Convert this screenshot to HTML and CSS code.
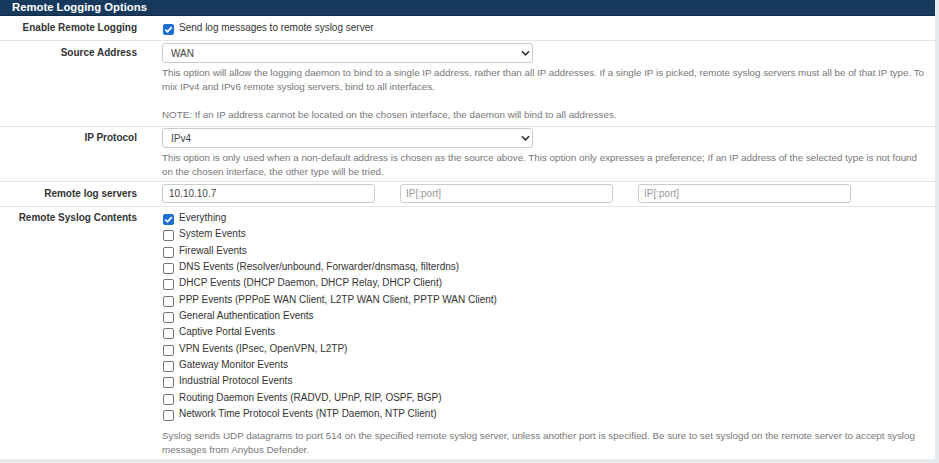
FILE: index.html
```html
<!DOCTYPE html>
<html>
<head>
<meta charset="utf-8">
<link rel="stylesheet" href="styles.css">
</head>
<body>
<div class="panel">
  <div class="panel-heading">Remote Logging Options</div>

  <div class="row row-enable">
    <div class="label">Enable Remote Logging</div>
    <div class="content">
      <div class="check-line"><span class="cb checked"><svg viewBox="0 0 11 11" width="11" height="11"><path d="M2.3 5.6 L4.5 7.8 L8.8 3.2" fill="none" stroke="#fff" stroke-width="1.8"/></svg></span><span>Send log messages to remote syslog server</span></div>
    </div>
  </div>

  <div class="row row-select row-source">
    <div class="label">Source Address</div>
    <div class="content">
      <div class="select"><span>WAN</span><svg class="chev" viewBox="0 0 10 6" width="9" height="6"><path d="M1 1 L5 5 L9 1" fill="none" stroke="#333" stroke-width="1.8"/></svg></div>
      <div class="help">This option will allow the logging daemon to bind to a single IP address, rather than all IP addresses. If a single IP is picked, remote syslog servers must all be of that IP type. To mix IPv4 and IPv6 remote syslog servers, bind to all interfaces.<br><br>NOTE: If an IP address cannot be located on the chosen interface, the daemon will bind to all addresses.</div>
    </div>
  </div>

  <div class="row row-select row-proto">
    <div class="label">IP Protocol</div>
    <div class="content">
      <div class="select"><span>IPv4</span><svg class="chev" viewBox="0 0 10 6" width="9" height="6"><path d="M1 1 L5 5 L9 1" fill="none" stroke="#333" stroke-width="1.8"/></svg></div>
      <div class="help">This option is only used when a non-default address is chosen as the source above. This option only expresses a preference; If an IP address of the selected type is not found on the chosen interface, the other type will be tried.</div>
    </div>
  </div>

  <div class="row row-servers">
    <div class="label">Remote log servers</div>
    <div class="content inputs">
      <div class="input">10.10.10.7</div>
      <div class="input placeholder">IP[:port]</div>
      <div class="input placeholder">IP[:port]</div>
    </div>
  </div>

  <div class="row row-contents">
    <div class="label">Remote Syslog Contents</div>
    <div class="content">
      <div class="check-list">
        <div class="check-line"><span class="cb checked"><svg viewBox="0 0 11 11" width="11" height="11"><path d="M2.3 5.6 L4.5 7.8 L8.8 3.2" fill="none" stroke="#fff" stroke-width="1.8"/></svg></span><span>Everything</span></div>
        <div class="check-line"><span class="cb"></span><span>System Events</span></div>
        <div class="check-line"><span class="cb"></span><span>Firewall Events</span></div>
        <div class="check-line"><span class="cb"></span><span>DNS Events (Resolver/unbound, Forwarder/dnsmasq, filterdns)</span></div>
        <div class="check-line"><span class="cb"></span><span>DHCP Events (DHCP Daemon, DHCP Relay, DHCP Client)</span></div>
        <div class="check-line"><span class="cb"></span><span>PPP Events (PPPoE WAN Client, L2TP WAN Client, PPTP WAN Client)</span></div>
        <div class="check-line"><span class="cb"></span><span>General Authentication Events</span></div>
        <div class="check-line"><span class="cb"></span><span>Captive Portal Events</span></div>
        <div class="check-line"><span class="cb"></span><span>VPN Events (IPsec, OpenVPN, L2TP)</span></div>
        <div class="check-line"><span class="cb"></span><span>Gateway Monitor Events</span></div>
        <div class="check-line"><span class="cb"></span><span>Industrial Protocol Events</span></div>
        <div class="check-line"><span class="cb"></span><span>Routing Daemon Events (RADVD, UPnP, RIP, OSPF, BGP)</span></div>
        <div class="check-line"><span class="cb"></span><span>Network Time Protocol Events (NTP Daemon, NTP Client)</span></div>
      </div>
      <div class="help footer-help">Syslog sends UDP datagrams to port 514 on the specified remote syslog server, unless another port is specified. Be sure to set syslogd on the remote server to accept syslog messages from Anybus Defender.</div>
    </div>
  </div>
</div>
</body>
</html>
```

FILE: styles.css
```css
* { box-sizing: border-box; }
html, body { margin: 0; padding: 0; }
body {
  background: #e8ebee;
  font-family: "Liberation Sans", Arial, sans-serif;
  font-size: 10px;
  color: #333;
  width: 939px;
  height: 463px;
  overflow: hidden;
}
.panel {
  width: 935px;
  height: 459px;
  background: #fff;
}
.panel-heading {
  background: #173a5c;
  color: #fff;
  font-weight: bold;
  font-size: 11.3px;
  height: 16px;
  line-height: 15px;
  padding-left: 12px;
  border-bottom: 1px solid #0f2b47;
}
.row {
  display: grid;
  grid-template-columns: 137px 1fr;
  column-gap: 25px;
  border-bottom: 1px solid #e4e4e4;
}
.label {
  text-align: right;
  font-weight: bold;
  color: #333;
}
.row-enable { height: 25px; padding-top: 5px; }
.row-enable .label { line-height: 14px; }
.row-source { padding-top: 2px; padding-bottom: 4px; }
.row-proto { padding-top: 1px; padding-bottom: 2px; }
.row-select .label { line-height: 19px; }
.select {
  width: 371px;
  height: 20px;
  border: 1px solid #ccc;
  border-radius: 3px;
  display: flex;
  align-items: center;
  justify-content: space-between;
  padding: 0 2px 0 8px;
  color: #444;
}
.help {
  color: #777;
  font-size: 9.8px;
  line-height: 14px;
  margin-top: 3px;
  padding-right: 6px;
}
.row-servers { height: 25px; padding-top: 2px; }
.row-servers .label { line-height: 20px; }
.inputs { display: flex; gap: 25px; }
.input {
  width: 213px;
  height: 19px;
  border: 1px solid #ccc;
  border-radius: 3px;
  padding: 0 6px;
  line-height: 17px;
  color: #444;
}
.input.placeholder { color: #999; padding-left: 5px; }
.row-contents { border-bottom: none; padding-top: 4px; }
.row-contents .label { line-height: 14px; }
.check-list { display: flex; flex-direction: column; }
.check-line {
  display: flex;
  align-items: flex-start;
  height: 16.33px;
  line-height: 14px;
  color: #333;
}
.cb {
  width: 11px;
  height: 11px;
  border: 1px solid #767676;
  border-radius: 2px;
  margin: 3px 5px 0 1px;
  flex: none;
  display: flex;
}
.cb.checked { background: #1b6fd3; border-color: #1b6fd3; }
.cb svg { display: block; margin: -1px; }
.footer-help { margin-top: 6px; }
```
